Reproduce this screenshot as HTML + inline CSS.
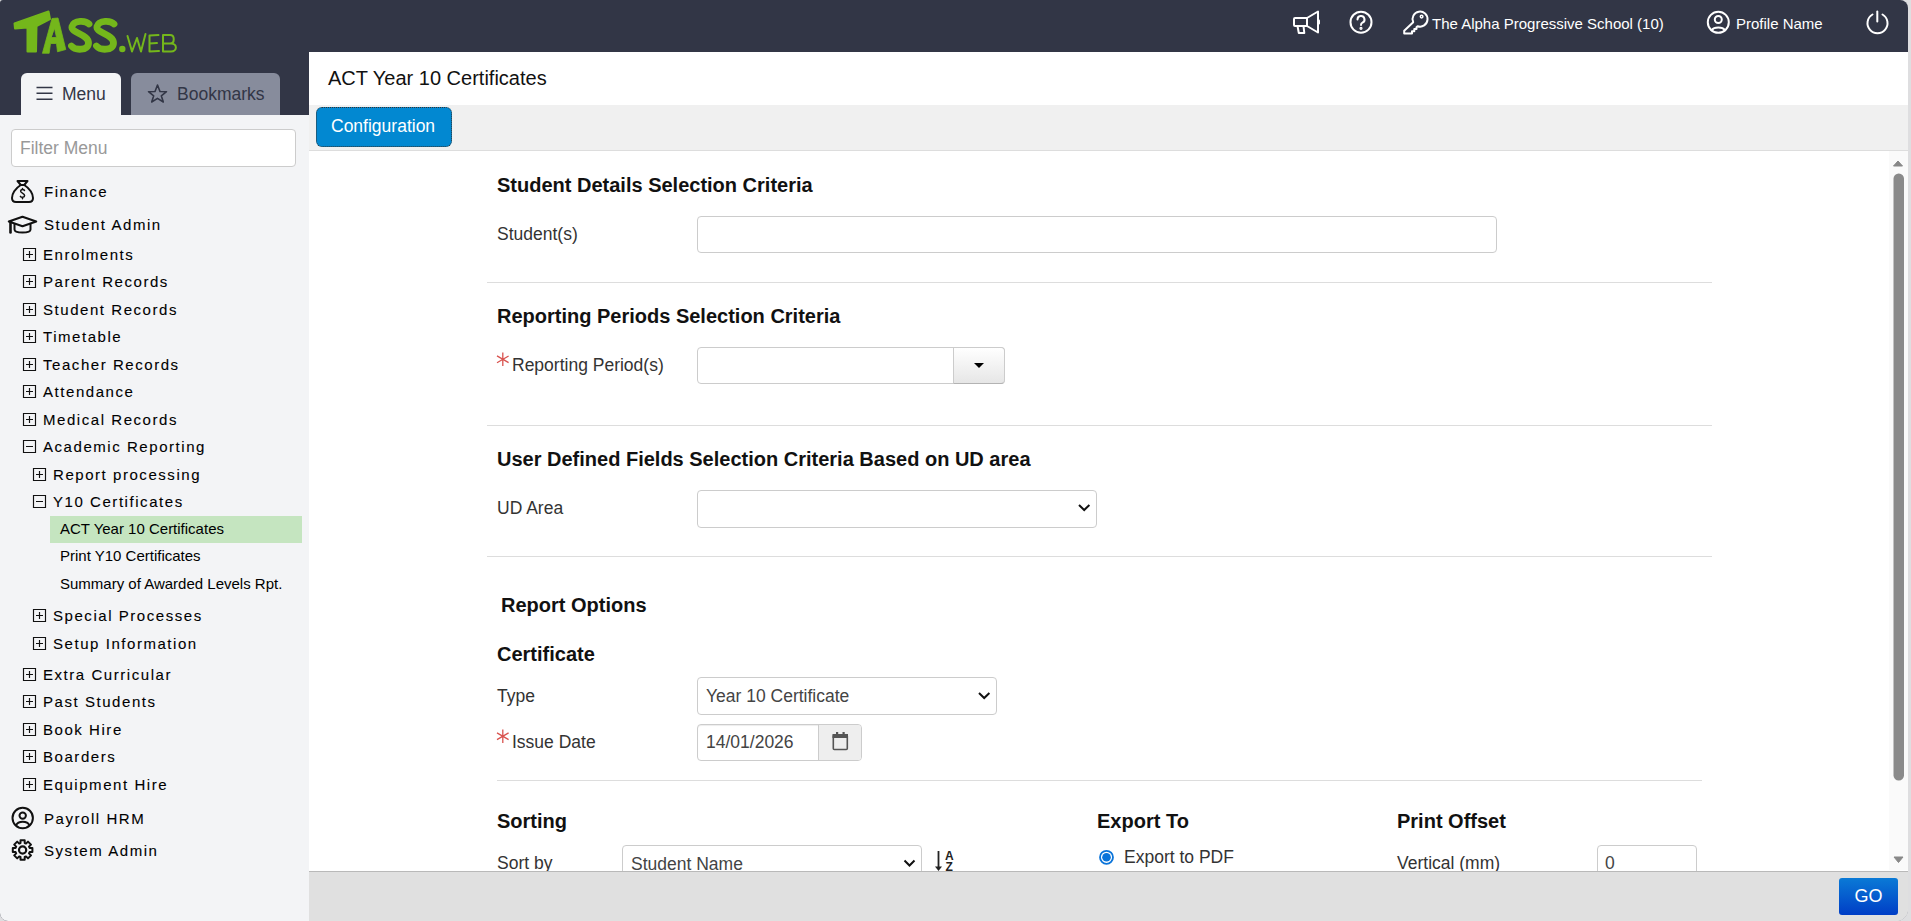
<!DOCTYPE html>
<html><head><meta charset="utf-8">
<style>
*{box-sizing:border-box;margin:0;padding:0}
html,body{width:1911px;height:921px;overflow:hidden;background:#dedee0;font-family:"Liberation Sans",sans-serif}
#frame{position:absolute;left:0;top:0;width:1908px;height:921px;background:#323646;border-radius:3px 8px 12px 8px;overflow:hidden}
.a{position:absolute;white-space:nowrap}
#side{left:0;top:115px;width:309px;height:806px;background:#f3f4f6}
#main{left:309px;top:52px;width:1599px;height:869px;background:#fff}
.tab{top:73px;height:42px;border-radius:6px 6px 0 0;font-size:18px;color:#323646}
#tmenu{left:21px;width:100px;background:#f3f4f6}
#tbook{left:131px;width:149px;background:#878c9c}
#filter{left:11px;top:129px;width:285px;height:38px;background:#fff;border:1px solid #ccc;border-radius:4px;font-size:17.5px;color:#999;padding:8px 0 0 8px}
.mi{font-size:15px;letter-spacing:1.55px;color:#000;-webkit-text-stroke:0.1px #000}
.sub{font-size:15px;color:#000}
.hd{color:#fff;font-size:15px}
#title{left:328px;top:67px;font-size:20px;color:#111}
#tabbar{left:309px;top:105px;width:1599px;height:46px;background:#f0f0f0;border-bottom:1px solid #ddd}
#cfg{left:316px;top:107px;width:136px;height:40px;background:#0288d1;border:1px dotted #333;border-radius:6px;color:#fff;font-size:17.5px;padding:8px 0 0 14px}
#foot{left:309px;top:871px;width:1599px;height:50px;background:#e0e0e0;border-top:1px solid #b9b9b9}
#go{left:1839px;top:878px;width:59px;height:37px;background:linear-gradient(#0a7ad6,#003ec6);border-radius:3px;color:#fff;font-size:18px;text-align:center;padding-top:8px}
.h{font-size:20px;font-weight:bold;color:#111}
.lbl{font-size:17.5px;color:#333}
.inp{position:absolute;background:#fff;border:1px solid #ccc;border-radius:4px;font-size:17.5px;color:#444;padding:8px 0 0 8px;white-space:nowrap}
.hr{position:absolute;height:1px;background:#ddd}
.req{color:#d9534f}
#sb{left:1889px;top:151px;width:19px;height:719px;background:#fafafa}
#ov{position:absolute;left:0;top:0}
</style></head><body>
<div id="frame">
<div class="a hd" style="left:1432px;top:15px">The Alpha Progressive School (10)</div>
<div class="a hd" style="left:1736px;top:15px">Profile Name</div>

<div class="a tab" id="tmenu"></div>
<div class="a tab" id="tbook"></div>
<div class="a" style="left:62px;top:84px;font-size:17.5px;color:#323646">Menu</div>
<div class="a" style="left:177px;top:84px;font-size:17.5px;color:#323646">Bookmarks</div>
<div class="a" id="side"></div>
<div class="a" id="filter">Filter Menu</div>

<div class="a mi" style="left:44px;top:183px">Finance</div>
<div class="a mi" style="left:44px;top:216px">Student Admin</div>
<div class="a mi" style="left:43px;top:246px">Enrolments</div>
<div class="a mi" style="left:43px;top:273px">Parent Records</div>
<div class="a mi" style="left:43px;top:301px">Student Records</div>
<div class="a mi" style="left:43px;top:328px">Timetable</div>
<div class="a mi" style="left:43px;top:356px">Teacher Records</div>
<div class="a mi" style="left:43px;top:383px">Attendance</div>
<div class="a mi" style="left:43px;top:411px">Medical Records</div>
<div class="a mi" style="left:43px;top:438px">Academic Reporting</div>
<div class="a mi" style="left:53px;top:466px">Report processing</div>
<div class="a mi" style="left:53px;top:493px">Y10 Certificates</div>
<div class="a" style="left:50px;top:516px;width:252px;height:27px;background:#c5e5c0"></div>
<div class="a sub" style="left:60px;top:520px">ACT Year 10 Certificates</div>
<div class="a sub" style="left:60px;top:547px">Print Y10 Certificates</div>
<div class="a sub" style="left:60px;top:575px">Summary of Awarded Levels Rpt.</div>
<div class="a mi" style="left:53px;top:607px">Special Processes</div>
<div class="a mi" style="left:53px;top:635px">Setup Information</div>
<div class="a mi" style="left:43px;top:666px">Extra Curricular</div>
<div class="a mi" style="left:43px;top:693px">Past Students</div>
<div class="a mi" style="left:43px;top:721px">Book Hire</div>
<div class="a mi" style="left:43px;top:748px">Boarders</div>
<div class="a mi" style="left:43px;top:776px">Equipment Hire</div>
<div class="a mi" style="left:44px;top:810px">Payroll HRM</div>
<div class="a mi" style="left:44px;top:842px">System Admin</div>

<!-- main -->
<div class="a" id="main"></div>
<div class="a" id="title">ACT Year 10 Certificates</div>
<div class="a" id="tabbar"></div>
<div class="a" id="cfg">Configuration</div>

<div class="a h" style="left:497px;top:174px">Student Details Selection Criteria</div>
<div class="a lbl" style="left:497px;top:224px">Student(s)</div>
<div class="inp" style="left:697px;top:216px;width:800px;height:37px"></div>
<div class="hr" style="left:487px;top:282px;width:1225px"></div>

<div class="a h" style="left:497px;top:305px">Reporting Periods Selection Criteria</div>
<div class="a lbl" style="left:512px;top:355px">Reporting Period(s)</div>
<div class="inp" style="left:697px;top:347px;width:308px;height:37px"></div>
<div class="a" style="left:953px;top:347px;width:52px;height:37px;background:linear-gradient(#fff,#e6e6e6);border:1px solid #ccc;border-bottom-color:#b3b3b3;border-radius:0 4px 4px 0"></div>
<div class="hr" style="left:487px;top:425px;width:1225px"></div>

<div class="a h" style="left:497px;top:448px">User Defined Fields Selection Criteria Based on UD area</div>
<div class="a lbl" style="left:497px;top:498px">UD Area</div>
<div class="inp" style="left:697px;top:490px;width:400px;height:38px"></div>
<div class="hr" style="left:487px;top:556px;width:1225px"></div>

<div class="a h" style="left:501px;top:594px">Report Options</div>
<div class="a h" style="left:497px;top:643px">Certificate</div>
<div class="a lbl" style="left:497px;top:686px">Type</div>
<div class="inp" style="left:697px;top:677px;width:300px;height:38px">Year 10 Certificate</div>
<div class="a lbl" style="left:512px;top:732px">Issue Date</div>
<div class="inp" style="left:697px;top:724px;width:165px;height:37px;padding-top:7px;box-shadow:inset 0 1px 1px rgba(0,0,0,.075)">14/01/2026</div>
<div class="a" style="left:818px;top:725px;width:43px;height:35px;background:#eee;border-left:1px solid #ccc;border-radius:0 3px 3px 0"></div>
<div class="hr" style="left:497px;top:780px;width:1205px"></div>

<div class="a h" style="left:497px;top:810px">Sorting</div>
<div class="a lbl" style="left:497px;top:853px">Sort by</div>
<div class="inp" style="left:622px;top:845px;width:300px;height:38px">Student Name</div>
<div class="a h" style="left:1097px;top:810px">Export To</div>
<div class="a lbl" style="left:1124px;top:847px">Export to PDF</div>
<div class="a h" style="left:1397px;top:810px">Print Offset</div>
<div class="a lbl" style="left:1397px;top:853px">Vertical (mm)</div>
<div class="inp" style="left:1597px;top:845px;width:100px;height:38px;padding:7px 0 0 7px">0</div>

<div class="a" id="sb"></div>
<div class="a" id="foot"></div>
<div class="a" id="go">GO</div>

<svg id="ov" width="1911" height="921" viewBox="0 0 1911 921">
 <!-- logo -->
 <g fill="#74b71b" stroke="#74b71b" stroke-linejoin="round" stroke-linecap="round">
  <path d="M14.5 23.5 L48.5 11.5 L50 19 L36.5 26 L36 51.5 L27.5 51.5 L27.5 27.5 L15 28.5 Z" stroke-width="2"/>
  <path d="M42.5 53 L52 18.5 L58 18 L65.8 49.5 L57.5 51.8 L56.5 43.5 L50.5 43.5 L49.2 53 Z M51.5 37.5 L56.5 37.5 L54.5 28.5 Z" stroke-width="0.8" fill-rule="evenodd"/>
  <path d="M89 24 C86 20.5 74 19.5 72 26.5 C70.5 33 88.5 34 88.5 43 C88.5 51 75 50.5 71.5 46" fill="none" stroke-width="6.8"/>
  <path d="M114 24 C111 20.5 99 19.5 97 26.5 C95.5 33 113.5 34 113.5 43 C113.5 51 100 50.5 96.5 46" fill="none" stroke-width="6.8"/>
  <circle cx="122.3" cy="49" r="3.2" stroke="none"/>
  <path d="M127.5 36 L132 51.5 L137 38 L141 51.5 L145.5 34 M158.5 35 L149.5 35.5 L149.5 51.5 L159 51 M149.5 43.5 L157 43 M163 35 L163 51.5 L171 51.5 C177.5 51.5 177.5 43.5 171 43.5 L163 43.5 M163 35 L170 35 C175 35 175 43.5 170 43.5" fill="none" stroke-width="2"/>
 </g>
 <!-- header icons -->
 <g fill="none" stroke="#fff" stroke-width="2" stroke-linejoin="round" stroke-linecap="round">
  <path d="M1295 18 h12 v8 h-12 a1 1 0 0 1 -1 -1 v-6 a1 1 0 0 1 1 -1z"/>
  <path d="M1307 18 L1318 11.5 V32.5 L1307 26"/>
  <path d="M1319 20.5 v3"/>
  <path d="M1297.5 26 l1.3 7 h5.5 l-0.8 -7"/>
  <circle cx="1361" cy="22.2" r="10.5"/>
  <path d="M1357.5 19.5 a3.5 3.5 0 1 1 5 3.2 c-1.2 .6 -1.5 1.2 -1.5 2.3"/>
  <circle cx="1361" cy="28.3" r="0.6" fill="#fff"/>
  <path d="M1413.2 22.2 A7.5 7.5 0 1 1 1417.6 26.2 L1416.5 27.3 V29 H1414.3 V31.2 H1412 V33.5 H1404.2 V30.8 Z"/>
  <circle cx="1421.6" cy="16.6" r="1.3" stroke-width="1.5"/>
  <circle cx="1718.3" cy="22.3" r="10.5"/>
  <circle cx="1718.3" cy="19.5" r="3.5"/>
  <path d="M1711.5 30.2 a7.5 4.5 0 0 1 13.6 0"/>
  <path d="M1872.5 14.5 a10 10 0 1 0 10 0"/>
  <path d="M1877.3 11.5 v10"/>
 </g>
 <!-- tabs icons -->
 <g fill="none" stroke="#323646" stroke-width="1.6">
  <path d="M36.5 87.5 h16 M36.5 93.3 h16 M36.5 99.2 h16"/>
  <path d="M157.5 85 L160 91.5 L166.5 91.7 L161.3 95.8 L163.3 102 L157.5 98.3 L151.7 102 L153.7 95.8 L148.5 91.7 L155 91.5 Z" stroke-linejoin="round"/>
 </g>
 <!-- side icons -->
 <g fill="none" stroke="#111" stroke-width="2" stroke-linejoin="round" stroke-linecap="round">
  <path d="M17.5 181 h10 l-3.3 4 h-3.4 z"/>
  <path d="M20.8 185 C15 188.5 12 194 12 198 C12 201 13.5 202 16 202 H29 C31.5 202 33 201 33 198 C33 194 30 188.5 24.2 185"/>
  <path d="M24.5 190.5 C24 189.3 21 189 20.6 191 C20.2 193 24.6 193.2 24.6 195.5 C24.6 197.7 21.2 197.7 20.4 196.3 M22.5 188.5 v1 M22.5 197.8 v1" stroke-width="1.5"/>
  <path d="M8.8 221.5 L22.5 216.8 L36.2 221.5 L22.5 226.3 Z" stroke-width="2.1"/>
  <path d="M14.5 224.5 V229.5 C14.5 233.5 30.5 233.5 30.5 229.5 V224.5"/>
  <path d="M10.5 222.5 V232.5" stroke-width="2.6"/>
  <circle cx="22.7" cy="818" r="10.2"/>
  <circle cx="22.7" cy="815.6" r="3.2"/>
  <path d="M16.3 825 C18 820.5 27.5 820.5 29.2 825"/>
  <path d="M20.5 840.2 L24.7 840.2 L24.7 843.0 L26.0 843.6 L28.0 841.6 L31.0 844.6 L29.0 846.6 L29.6 847.9 L32.4 847.9 L32.4 852.1 L29.6 852.1 L29.0 853.4 L31.0 855.4 L28.0 858.4 L26.0 856.4 L24.7 857.0 L24.7 859.8 L20.5 859.8 L20.5 857.0 L19.2 856.4 L17.2 858.4 L14.2 855.4 L16.2 853.4 L15.6 852.1 L12.8 852.1 L12.8 847.9 L15.6 847.9 L16.2 846.6 L14.2 844.6 L17.2 841.6 L19.2 843.6 L20.5 843.0Z"/>
  <circle cx="22.6" cy="850" r="3.6" stroke-width="2.2"/>
 </g>
 <!-- plus/minus boxes -->
 <g fill="none" stroke="#111" stroke-width="1.15">
  <path d="M23.5 248.5 h12 v12 h-12 z M26.0 254.5 h7 M29.5 251.0 v7"/>
  <path d="M23.5 275.5 h12 v12 h-12 z M26.0 281.5 h7 M29.5 278.0 v7"/>
  <path d="M23.5 303.5 h12 v12 h-12 z M26.0 309.5 h7 M29.5 306.0 v7"/>
  <path d="M23.5 330.5 h12 v12 h-12 z M26.0 336.5 h7 M29.5 333.0 v7"/>
  <path d="M23.5 358.5 h12 v12 h-12 z M26.0 364.5 h7 M29.5 361.0 v7"/>
  <path d="M23.5 385.5 h12 v12 h-12 z M26.0 391.5 h7 M29.5 388.0 v7"/>
  <path d="M23.5 413.5 h12 v12 h-12 z M26.0 419.5 h7 M29.5 416.0 v7"/>
  <path d="M23.5 440.5 h12 v12 h-12 z M26.0 446.5 h7"/>
  <path d="M33.5 468.5 h12 v12 h-12 z M36.0 474.5 h7 M39.5 471.0 v7"/>
  <path d="M33.5 495.5 h12 v12 h-12 z M36.0 501.5 h7"/>
  <path d="M33.5 609.5 h12 v12 h-12 z M36.0 615.5 h7 M39.5 612.0 v7"/>
  <path d="M33.5 637.5 h12 v12 h-12 z M36.0 643.5 h7 M39.5 640.0 v7"/>
  <path d="M23.5 668.5 h12 v12 h-12 z M26.0 674.5 h7 M29.5 671.0 v7"/>
  <path d="M23.5 695.5 h12 v12 h-12 z M26.0 701.5 h7 M29.5 698.0 v7"/>
  <path d="M23.5 723.5 h12 v12 h-12 z M26.0 729.5 h7 M29.5 726.0 v7"/>
  <path d="M23.5 750.5 h12 v12 h-12 z M26.0 756.5 h7 M29.5 753.0 v7"/>
  <path d="M23.5 778.5 h12 v12 h-12 z M26.0 784.5 h7 M29.5 781.0 v7"/>
 </g>
 <!-- content icons -->
 <path d="M974 363 h10 l-5 5 z" fill="#000"/>
 <path d="M1079 505 l5.2 5 l5.2 -5" fill="none" stroke="#111" stroke-width="2"/>
 <path d="M979 693 l5.2 5 l5.2 -5" fill="none" stroke="#111" stroke-width="2"/>
 <path d="M904.5 860.5 l5 5 l5 -5" fill="none" stroke="#111" stroke-width="2"/>
 <g fill="#555">
  <rect x="832.5" y="734" width="15.5" height="4"/>
  <rect x="836" y="732" width="2.2" height="3"/>
  <rect x="842.5" y="732" width="2.2" height="3"/>
 </g>
 <rect x="833.3" y="735" width="14" height="14.5" fill="none" stroke="#555" stroke-width="1.6" rx="1"/>
 <path d="M938.5 851 V868" stroke="#222" stroke-width="1.8"/>
 <path d="M935 866.5 h7 l-3.5 4.5 z" fill="#222"/>
 <text x="945" y="860" font-family="Liberation Sans" font-weight="bold" font-size="12" fill="#222">A</text>
 <text x="945.5" y="871" font-family="Liberation Sans" font-weight="bold" font-size="12" fill="#222">Z</text>
 <circle cx="1106.5" cy="857.3" r="6.5" fill="#fff" stroke="#0a74da" stroke-width="1.8"/>
 <circle cx="1106.5" cy="857.3" r="4.3" fill="#0a74da"/>
 <!-- scrollbar -->
 <path d="M1893.5 166 l4.5 -5 l4.5 5 z" fill="#888" stroke="#888" stroke-linejoin="round"/>
 <rect x="1893.5" y="173.5" width="10.5" height="607" rx="5.2" fill="#8a8a8a"/>
 <path d="M1894 857 h9 l-4.5 5.5 z" fill="#888" stroke="#888" stroke-linejoin="round"/>
 <!-- required stars -->
 <path d="M502.8 352.6 v13.4 M497.0 355.9 l11.6 6.7 M497.0 362.7 l11.6 -6.7" stroke="#d9534f" stroke-width="1.3" fill="none"/>
 <path d="M502.8 729.6 v13.4 M497.0 732.9 l11.6 6.7 M497.0 739.6 l11.6 -6.7" stroke="#d9534f" stroke-width="1.3" fill="none"/>
</svg>
</div>
</body></html>
